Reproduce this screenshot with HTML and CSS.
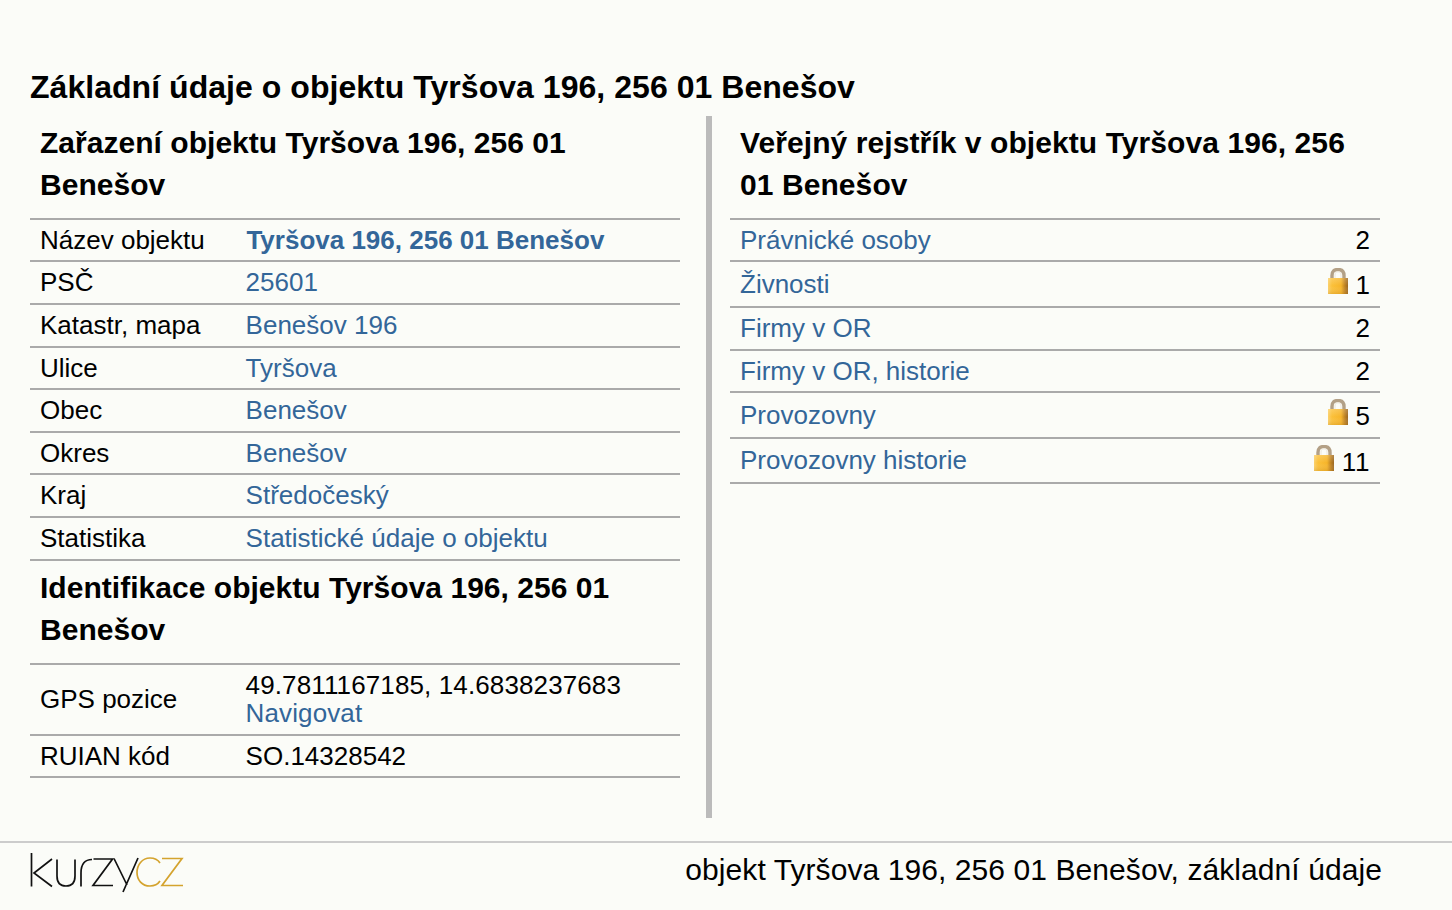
FILE: index.html
```html
<!DOCTYPE html>
<html lang="cs">
<head>
<meta charset="utf-8">
<title>Základní údaje o objektu</title>
<link rel="stylesheet" href="styles.css">
</head>
<body>
<svg class="defs" width="0" height="0" aria-hidden="true">
  <defs>
    <linearGradient id="lockbody" x1="0" x2="1" y1="0" y2="0">
      <stop offset="0" stop-color="#fbd06a"/>
      <stop offset=".2" stop-color="#fbc038"/>
      <stop offset=".65" stop-color="#f6b428"/>
      <stop offset=".85" stop-color="#bd8020"/>
      <stop offset="1" stop-color="#9a6620"/>
    </linearGradient>
    <linearGradient id="lockshade" x1="0" x2="0" y1="0" y2="1">
      <stop offset="0" stop-color="#fff" stop-opacity=".2"/>
      <stop offset=".5" stop-color="#fff" stop-opacity="0"/>
      <stop offset="1" stop-color="#b9801c" stop-opacity=".25"/>
    </linearGradient>
    <symbol id="lock" viewBox="0 0 20 26">
      <path d="M4 11V7.500C4 3 6.500 1.500 10 1.500s6 1.500 6 6V11" fill="none" stroke="#b3a086" stroke-width="3.400"/>
      <path d="M7 10V7C7 4.500 8 3.800 10 3.800s3 .7 3 3.200V10" fill="none" stroke="#ece6da" stroke-width="1"/>
      <rect x="0" y="10" width="20" height="16" fill="url(#lockbody)"/>
      <rect x="0" y="10" width="20" height="16" fill="url(#lockshade)"/>
    </symbol>
  </defs>
</svg>
<main class="page">
  <h1 class="title">Základní údaje o objektu Tyršova 196, 256 01 Benešov</h1>
  <div class="columns">
    <section class="col col-left">
      <h2 class="head">Zařazení objektu Tyršova 196, 256 01 Benešov</h2>
      <table class="info">
        <tr><th>Název objektu</th><td><a href="#"><b>Tyršova 196, 256 01 Benešov</b></a></td></tr>
        <tr><th>PSČ</th><td><a href="#">25601</a></td></tr>
        <tr><th>Katastr, mapa</th><td><a href="#">Benešov 196</a></td></tr>
        <tr><th>Ulice</th><td><a href="#">Tyršova</a></td></tr>
        <tr><th>Obec</th><td><a href="#">Benešov</a></td></tr>
        <tr><th>Okres</th><td><a href="#">Benešov</a></td></tr>
        <tr><th>Kraj</th><td><a href="#">Středočeský</a></td></tr>
        <tr><th>Statistika</th><td><a href="#">Statistické údaje o objektu</a></td></tr>
      </table>
      <h2 class="head head-next">Identifikace objektu Tyršova 196, 256 01 Benešov</h2>
      <table class="info">
        <tr><th>GPS pozice</th><td class="gps">49.7811167185, 14.6838237683<br><a href="#">Navigovat</a></td></tr>
        <tr class="short"><th>RUIAN kód</th><td>SO.14328542</td></tr>
      </table>
    </section>
    <section class="col col-right">
      <h2 class="head">Veřejný rejstřík v objektu Tyršova 196, 256 01 Benešov</h2>
      <table class="info reg">
        <tr><th><a href="#">Právnické osoby</a></th><td>2</td></tr>
        <tr class="locked"><th><a href="#">Živnosti</a></th><td><svg class="lock"><use href="#lock"/></svg> 1</td></tr>
        <tr><th><a href="#">Firmy v OR</a></th><td>2</td></tr>
        <tr><th><a href="#">Firmy v OR, historie</a></th><td>2</td></tr>
        <tr class="locked"><th><a href="#">Provozovny</a></th><td><svg class="lock"><use href="#lock"/></svg> 5</td></tr>
        <tr class="locked wide"><th><a href="#">Provozovny historie</a></th><td><svg class="lock"><use href="#lock"/></svg> 11</td></tr>
      </table>
    </section>
  </div>
</main>
<footer class="foot">
  <div class="logo" role="img" aria-label="kurzy.cz">
    <svg width="154" height="40" viewBox="0 0 154 40" fill="none" stroke-width="1.700">
      <g stroke="#111111">
        <path d="M1.500 0V33.500"/>
        <path d="M22 6L4 20 22 33.500"/>
        <path d="M27 6.500V23c0 7 4 10 9 10s9-3 9-10V6.500"/>
        <path d="M51 33.500V20c0-9 4-13.500 11-13.500"/>
        <path d="M63.500 6H82.500L63 32.500H83"/>
        <path d="M84 5.500L97 32M108 5L93 39"/>
      </g>
      <g stroke="#d4a32e">
        <path d="M130 10c-2-3-6-5-10-5C112 5 107 12 107 19.500S112 33 120 33c4 0 8-2 10-5"/>
        <path d="M132 5.500H152L132 32.500H153"/>
      </g>
    </svg>
  </div>
  <p class="foot-text">objekt Tyršova 196, 256 01 Benešov, základní údaje</p>
</footer>
</body>
</html>
```

FILE: styles.css
```css
html, body {
  margin: 0;
  padding: 0;
  background: #fbfcf8;
  color: #000;
  font-family: "Liberation Sans", Arial, sans-serif;
  font-size: 26px;
}
.defs { position: absolute; }
.page {
  padding: 66px 30px 0;
  height: 775px;
  box-sizing: border-box;
}
.title {
  margin: 0;
  font-size: 32px;
  line-height: 42px;
  font-weight: bold;
  letter-spacing: .04px;
}
.columns {
  display: flex;
  margin-top: 8px;
  height: 702px;
}
.col { width: 650px; }
.col-left { margin-right: 26px; }
.col-right {
  border-left: 6px solid #bbbbbb;
  padding-left: 18px;
}
.head {
  margin: 0;
  padding: 6px 10px 11.85px;
  font-size: 30px;
  line-height: 42px;
  font-weight: bold;
  letter-spacing: .03px;
}
.head-next { padding-top: 6.5px; }
.col-right .head { letter-spacing: .08px; }
.info {
  width: 650px;
  border-collapse: collapse;
  border-top: 2px solid #aaaaaa;
  table-layout: fixed;
}
.info tr { border-bottom: 2px solid #aaaaaa; }
.info th, .info td {
  padding: 6px 10px;
  line-height: 28.6px;
  font-weight: normal;
  text-align: left;
}
.info th { width: 185.6px; }
.info b { margin-left: .8px; }
.info .gps { letter-spacing: .12px; line-height: 28.2px; padding-bottom: 6.8px; }
.short th, .short td { padding-bottom: 5.4px; }
.reg th { width: auto; }
.reg td { width: 100px; text-align: right; }
.reg .locked th, .reg .locked td { height: 31.6px; }
.reg .wide td { letter-spacing: .6px; }
a { color: #336699; text-decoration: none; }
.lock { width: 20px; height: 26px; }
.foot {
  border-top: 2px solid #cccccc;
  margin-top: 66px;
  height: 67px;
  display: flex;
  justify-content: space-between;
  padding: 0 70px 0 30px;
}
.logo { padding-top: 10px; }
.foot-text {
  margin: 10px 0 0;
  font-size: 30px;
  line-height: 34px;
  letter-spacing: .08px;
}
```
